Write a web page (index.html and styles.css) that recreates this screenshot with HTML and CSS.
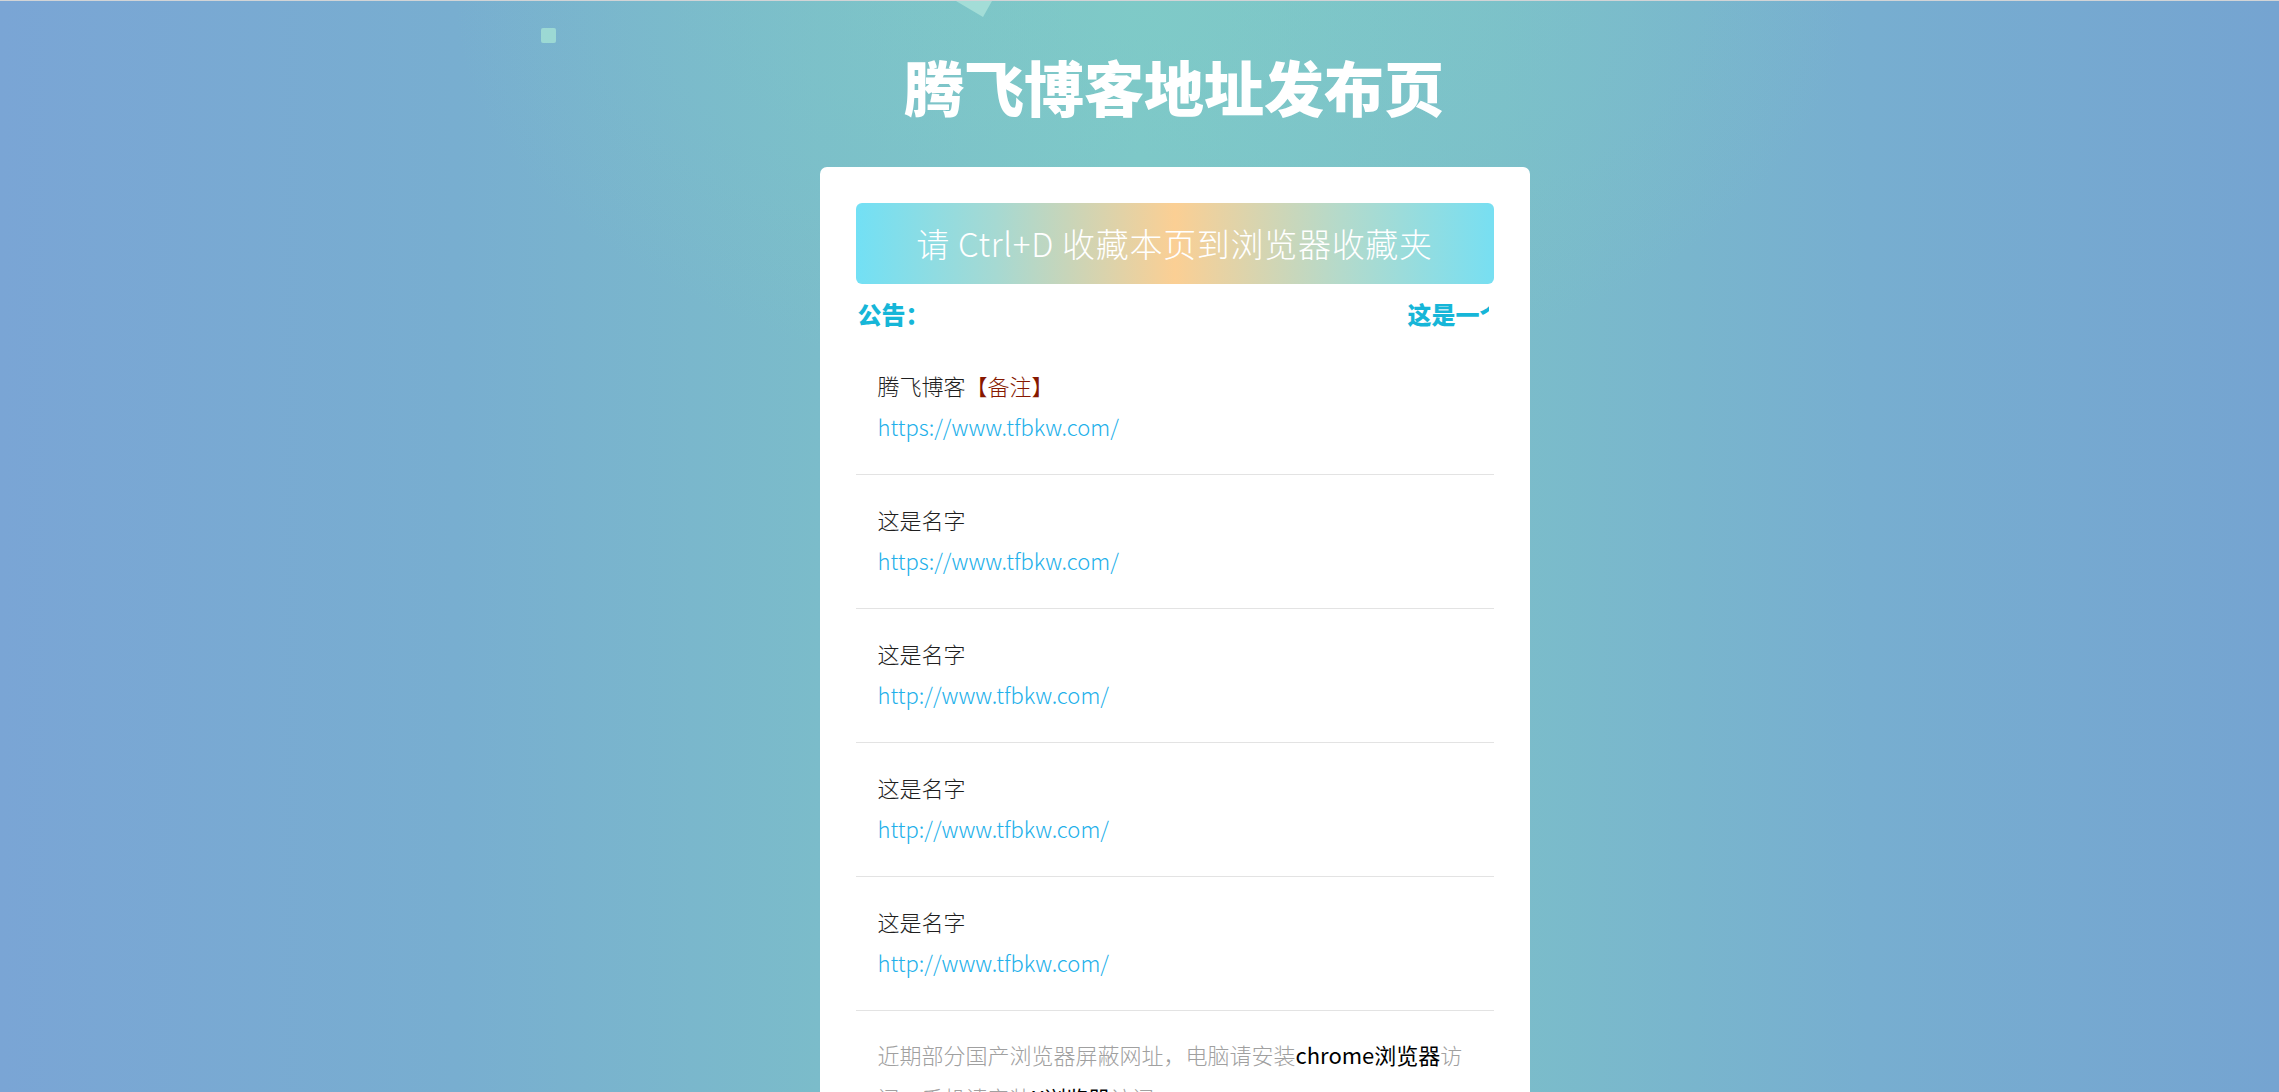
FILE: index.html
```html
<!DOCTYPE html>
<html lang="zh-CN">
<head>
<meta charset="utf-8">
<title>腾飞博客地址发布页</title>
<link rel="stylesheet" href="styles.css">
</head>
<body>
<div class="bg-deco">
  <span class="deco-square"></span>
  <svg class="deco-tri" width="40" height="18" viewBox="0 0 40 18"><polygon points="0,0 36,0 27,16" fill="#a3ddd7"/></svg>
</div>
<div class="page">
  <h1 class="title">腾飞博客地址发布页</h1>
  <div class="card">
    <div class="banner">请 Ctrl+D 收藏本页到浏览器收藏夹</div>
    <div class="notice">
      <span class="notice-label">公告：</span>
      <div class="notice-track"><span class="notice-text">这是一个公告，欢迎访问腾飞博客！</span></div>
    </div>
    <ul class="links">
      <li class="link-item">
        <div class="link-name">腾飞博客<span class="note">【备注】</span></div>
        <a class="link-url" href="#">https://www.tfbkw.com/</a>
      </li>
      <li class="link-item">
        <div class="link-name">这是名字</div>
        <a class="link-url" href="#">https://www.tfbkw.com/</a>
      </li>
      <li class="link-item">
        <div class="link-name">这是名字</div>
        <a class="link-url" href="#">http://www.tfbkw.com/</a>
      </li>
      <li class="link-item">
        <div class="link-name">这是名字</div>
        <a class="link-url" href="#">http://www.tfbkw.com/</a>
      </li>
      <li class="link-item">
        <div class="link-name">这是名字</div>
        <a class="link-url" href="#">http://www.tfbkw.com/</a>
      </li>
    </ul>
    <p class="tip">近期部分国产浏览器屏蔽网址，电脑请安装<span class="hl">chrome浏览器</span>访问，手机请安装<span class="hl">X浏览器</span>访问</p>
  </div>
</div>
</body>
</html>
```
FILE: styles.css
```css
html, body {
  margin: 0;
  padding: 0;
}
body {
  height: 1092px;
  overflow: hidden;
  border-top: 1px solid #d2d4d6;
  box-sizing: border-box;
  position: relative;
  font-family: "Noto Sans CJK SC", "Noto Sans", sans-serif;
  background:
    radial-gradient(ellipse 700px 400px at 1150px 0px, rgba(128, 206, 198, 0.55), rgba(128, 206, 198, 0) 100%),
    linear-gradient(90deg, #7aa5d5 0%, #78aed0 20%, #7bbcca 36%, #7dc5c9 50%, #7bbdca 66%, #77aed0 82%, #75a4d1 100%);
}
.bg-deco {
  position: absolute;
  left: 0;
  top: 0;
  width: 100%;
  height: 0;
}
.deco-square {
  position: absolute;
  left: 541px;
  top: 27px;
  width: 15px;
  height: 15px;
  border-radius: 2px;
  background: #9cd9d4;
}
.deco-tri {
  position: absolute;
  left: 956px;
  top: 0;
}
.page {
  display: flex;
  flex-direction: column;
}
.title {
  margin: 0;
  padding-top: 49px;
  text-align: center;
  padding-left: 69px;
  font-size: 60px;
  line-height: 72px;
  font-weight: 900;
  color: #fff;
  letter-spacing: 0;
}
.card {
  box-sizing: border-box;
  width: 710px;
  margin-top: 45px;
  margin-left: calc(50% - 320px);
  background: #fff;
  border-radius: 7px;
  padding: 36px 36px 0 36px;
}
.banner {
  height: 81px;
  line-height: 81px;
  border-radius: 6px;
  text-align: center;
  color: #fff;
  font-size: 33px;
  letter-spacing: 0.7px;
  font-weight: 300;
  background: linear-gradient(90deg, #72e0f5 0%, #a6d9d2 22%, #fbcf94 50%, #b4dacb 76%, #77dff2 100%);
}
.notice {
  display: flex;
  margin-top: 10px;
  height: 40px;
  line-height: 40px;
  font-size: 24px;
  font-weight: 900;
  color: #16b6d8;
}
.notice-label {
  padding-left: 2px;
  flex: none;
}
.notice-track {
  flex: 1;
  overflow: hidden;
  white-space: nowrap;
  margin-right: 5px;
}
.notice-text {
  display: inline-block;
  padding-left: 478px;
}
.links {
  list-style: none;
  margin: 7px 0 0 0;
  padding: 0;
}
.link-item {
  padding: 23px 22px 24px 22px;
  border-bottom: 1px solid #e3e3e3;
  font-size: 22px;
  line-height: 43px;
  font-weight: 300;
}
.link-name {
  color: #1e1e1e;
}
.note {
  color: #861800;
}
.link-url {
  display: block;
  margin-top: -2px;
  margin-bottom: 2px;
  color: #22b0ea;
  text-decoration: none;
}
.tip {
  margin: 0;
  padding: 22px 14px 0 22px;
  font-size: 22px;
  line-height: 43px;
  font-weight: 300;
  color: #a0a0a0;
}
.hl {
  color: #000;
  font-weight: 400;
}
```
